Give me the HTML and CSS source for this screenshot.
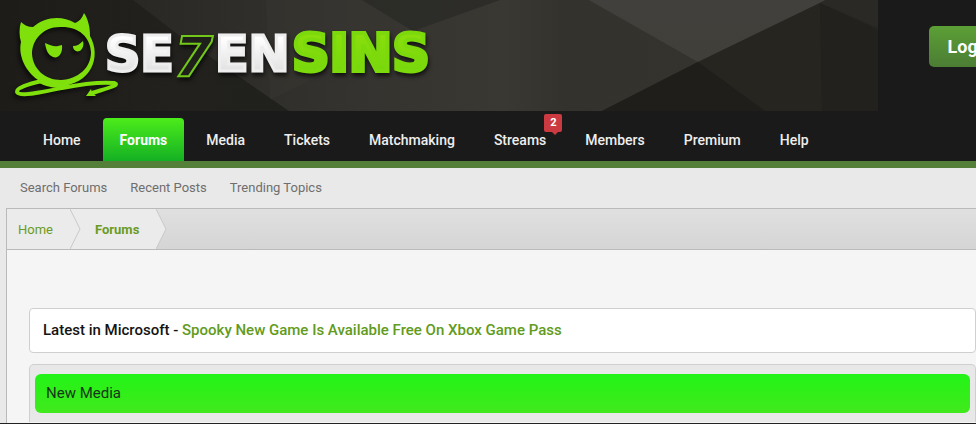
FILE: index.html
```html
<!DOCTYPE html>
<html lang="en">
<head>
<meta charset="utf-8">
<meta name="viewport" content="width=device-width, initial-scale=1">
<title>Forums | Se7enSins</title>
<link rel="stylesheet" href="styles.css">
</head>
<body>
<div class="page">
  <header class="header">
    <div class="banner">
      <svg class="banner-art" width="878" height="111" viewBox="0 0 878 111" aria-hidden="true">
        <defs>
          <linearGradient id="base" x1="0" x2="1" y1="0" y2="0">
            <stop offset="0" stop-color="#1d1c19"/><stop offset=".2" stop-color="#22211e"/><stop offset=".34" stop-color="#20201c"/>
          </linearGradient>
          <linearGradient id="mid" x1="0" x2="1" y1="0" y2="0">
            <stop offset="0" stop-color="#292825"/><stop offset=".3" stop-color="#34332f"/><stop offset=".5" stop-color="#3a3832"/><stop offset=".58" stop-color="#33322d"/><stop offset="1" stop-color="#35342f"/>
          </linearGradient>
          <linearGradient id="peak" x1="0" x2="0" y1="0" y2="1">
            <stop offset="0" stop-color="#42403c"/><stop offset="1" stop-color="#403f3a"/>
          </linearGradient>
        </defs>
        <rect width="878" height="111" fill="url(#base)"/>
        <path d="M133 0H878V111H289L180 36Z" fill="url(#mid)"/>
        <path d="M266 0H362L413 31 270 100Z" fill="#3b3935" opacity=".35"/>
        <path d="M362 0H500L413 31Z" fill="#2a2925" opacity=".75"/>
        <path d="M589 0H826L698 62Z" fill="url(#peak)"/>
        <path d="M826 0H878V111H602L698 62Z" fill="#262520"/>
        <path d="M698 62 765 111H602Z" fill="#1f1e1a"/>
        <path d="M820 3 878 30V111H822Z" fill="#22211d"/>
        <path d="M826 0H878V28L820 3Z" fill="#2a2925"/>
      </svg>
      <a class="logo" href="#" aria-label="Se7enSins home">
        <svg width="450" height="111" viewBox="0 0 450 111">
          <defs>
            <linearGradient id="silver" x1="0" x2="0" y1="0" y2="1">
              <stop offset=".2" stop-color="#fff"/><stop offset=".9" stop-color="#dcdcdc"/>
            </linearGradient>
            <linearGradient id="lime" x1="0" x2="0" y1="0" y2="1">
              <stop offset=".2" stop-color="#8ade0c"/><stop offset=".9" stop-color="#74d60c"/>
            </linearGradient>
          </defs>
          <g class="devil">
            <path fill-rule="evenodd" d="M21 22C24 25 28 27 33 27C45 17 61 15 75 23C80 21 82 18 84 13C88 19 90 27 90 36C102 57 91 85 59 86C51 86 44 84 38 80C25 71 18 55 21 42C19 36 19 28 21 22ZM62 27C43 26 32 40 32 54C33 69 45 80 61 80C78 79 91 68 91 52C90 37 79 27 62 27Z"/>
            <path d="M45 43C50 45 54 47 58 46L62 45C63 54 58 59 53 57C48 55 46 50 45 43Z"/>
            <path d="M83 41C80 44 77 46 73 46C73 51 78 53 81 50C83 48 84 45 83 41Z"/>
            <path class="tail" d="M42 81C28 84 16 88 17 92C19 97 38 93 62 88C82 84 102 82 114 83C121 85 108 88 92 93"/>
            <path d="M38 82C44 86 52 88 62 88L70 84 42 79Z"/>
            <path d="M86 96 91 89 92 92 96 96Z"/>
          </g>
          <g class="wordmark">
            <text class="white" x="105" y="71">SE</text>
            <text class="seven" x="174" y="76">7</text>
            <text class="white" x="215" y="71">EN</text>
            <text class="green" x="292" y="71">SINS</text>
          </g>
        </svg>
      </a>
      <button class="login" type="button">Log in</button>
    </div>
    <nav class="nav" aria-label="Main">
      <a href="#">Home</a>
      <a class="active" href="#">Forums</a>
      <a href="#">Media</a>
      <a href="#">Tickets</a>
      <a href="#">Matchmaking</a>
      <a href="#">Streams<span class="badge">2</span></a>
      <a href="#">Members</a>
      <a href="#">Premium</a>
      <a href="#">Help</a>
    </nav>
  </header>
  <nav class="subnav" aria-label="Forums">
    <a href="#">Search Forums</a>
    <a href="#">Recent Posts</a>
    <a href="#">Trending Topics</a>
  </nav>
  <main class="content">
    <nav class="crumbs" aria-label="Breadcrumb">
      <a href="#">Home<svg class="arrow" width="12" height="40" viewBox="0 0 12 40" aria-hidden="true"><path d="M0 0 10 20 0 40"/></svg></a>
      <a class="current" href="#">Forums<svg class="arrow" width="12" height="40" viewBox="0 0 12 40" aria-hidden="true"><path d="M0 0 10 20 0 40"/></svg></a>
    </nav>
    <div class="blocks">
      <p class="notice">Latest in Microsoft - <a href="#">Spooky New Game Is Available Free On Xbox Game Pass</a></p>
      <section class="media">
        <h2>New Media</h2>
      </section>
    </div>
  </main>
</div>
</body>
</html>
```
FILE: styles.css
```css
* { box-sizing: border-box; }

body {
  margin: 0;
  background: #e9e9e9;
  color: #141414;
  font-family: Roboto, "Liberation Sans", sans-serif;
  overflow: hidden;
}

a { color: inherit; text-decoration: none; }

.page {
  display: flex;
  flex-direction: column;
  min-height: 100vh;
  border-bottom: 1px solid #222;
}

.header {
  background: #1a1a1a;
  border-bottom: 7px solid #547f38;
}

.banner {
  position: relative;
  display: flex;
  align-items: flex-start;
  justify-content: space-between;
  height: 111px;
  margin-right: -39px;
}

.banner-art { position: absolute; top: 0; left: 0; }

.logo { position: relative; flex: none; }
.logo svg { display: block; }

.devil {
  fill: #7fe00c;
  filter: drop-shadow(-2px 3px 2px #0009);
}
.tail { fill: none; stroke: #7fe00c; stroke-width: 4px; }

.wordmark {
  font: 700 49px "DejaVu Sans", sans-serif;
  filter: drop-shadow(1px 3px 2px #000a);
}
.white { fill: url(#silver); stroke: #eee; stroke-width: 3px; }
.green { fill: url(#lime); stroke: #7cda0c; stroke-width: 4px; font-size: 52px; }
.seven { fill: #1f1f1b; stroke: #72c818; stroke-width: 2px; font-size: 56px; font-style: italic; }

.login {
  flex: none;
  margin-top: 26px;
  padding: 0 18px;
  height: 41px;
  border: 0;
  border-radius: 5px;
  background: linear-gradient(#5c9f36, #4b7d34);
  color: #fff;
  font: 700 18px Roboto, sans-serif;
}

.nav {
  display: flex;
  gap: 5px;
  padding: 7px 26px 0;
  color: #eee;
  font-size: 14px;
  font-weight: 500;
  line-height: 41px;
}
.nav a { position: relative; padding: 2px 17px 0; }
.nav .active {
  border-radius: 4px 4px 0 0;
  background: linear-gradient(#4cec1b, #14b024);
  color: #fff;
  font-weight: 700;
}

.badge {
  position: absolute;
  top: -4px;
  right: 1px;
  width: 18px;
  border-radius: 2px;
  background: #ca3a40;
  color: #fff;
  font-size: 11px;
  font-weight: 700;
  line-height: 18px;
  text-align: center;
}
.badge::after {
  content: "";
  position: absolute;
  top: 18px;
  left: 8px;
  border: 3px solid transparent;
  border-top-color: #ca3a40;
  border-bottom: 0;
}

.subnav {
  display: flex;
  gap: 23px;
  padding: 0 20px;
  color: #6e6e6e;
  font-size: 13px;
  line-height: 40px;
}

.content {
  flex: 1;
  margin-left: 6px;
  border: solid #bababa;
  border-width: 1px 0 0 1px;
  background: #f5f5f5;
}

.crumbs {
  display: flex;
  border-bottom: 1px solid #bababa;
  background: linear-gradient(#e0e0e0, #d5d5d5);
  color: #6a9b25;
  font-size: 13px;
  line-height: 38px;
}
.crumbs a {
  position: relative;
  padding: 2px 17px 0 11px;
  background: #ebebeb;
}
.crumbs .current { padding-left: 25px; font-weight: 700; }
.arrow { position: absolute; top: 0; left: 100%; z-index: 1; }
.arrow path { fill: #ebebeb; stroke: #c8c8c8; }

.blocks {
  display: flex;
  flex-direction: column;
  gap: 11px;
  padding: 58px 0 0 22px;
}

.notice {
  margin: 0;
  padding: 0 13px;
  border: 1px solid #cfcfcf;
  border-radius: 4px;
  background: #fff;
  font-size: 15px;
  font-weight: 500;
  line-height: 43px;
}
.notice a { color: #619b20; }

.media {
  padding: 9px 5px;
  border: 1px solid #cfcfcf;
  border-bottom: 0;
  border-radius: 5px 5px 0 0;
  background: #e8e8e8;
}
.media h2 {
  margin: 0;
  padding: 0 11px;
  border-radius: 6px;
  background: linear-gradient(#22f417, #41e91c);
  color: #17351a;
  font-size: 15px;
  font-weight: 400;
  line-height: 39px;
}
```
